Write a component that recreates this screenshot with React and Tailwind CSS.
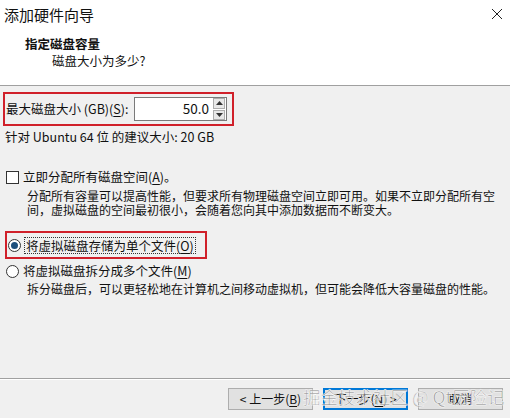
import React, { useState } from 'react';

const font = "font-['Noto_Sans_CJK_SC','Noto_Sans',sans-serif]";

const Key = ({ children }) => <span className="underline underline-offset-2">{children}</span>;

const SpinBox = ({ value }) => (
    <div className="ml-auto mr-[5px] flex h-[24px] w-[93px] items-center border border-[#7a7a7a] bg-white">
        <span className="flex-1 pr-[4px] text-right text-[13.5px] leading-none text-[#111]">{value}</span>
        <div className="mr-[1px] flex h-[22px] w-[12px] flex-col gap-[1px]">
            <div className="flex flex-1 items-center justify-center border border-[#adadad] bg-[#e8e8e8]">
                <svg width="7" height="4" viewBox="0 0 7 4"><path d="M0 4 L3.5 0 L7 4 Z" fill="#333" /></svg>
            </div>
            <div className="flex flex-1 items-center justify-center border border-[#adadad] bg-[#e8e8e8]">
                <svg width="7" height="4" viewBox="0 0 7 4"><path d="M0 0 L3.5 4 L7 0 Z" fill="#333" /></svg>
            </div>
        </div>
    </div>
);

const Radio = ({ checked }) => (
    <span className="flex h-[13px] w-[13px] shrink-0 items-center justify-center rounded-full border border-[#333] bg-white">
        {checked && <span className="h-[7px] w-[7px] rounded-full bg-[#1d4f7c]" />}
    </span>
);

const Button = ({ children, primary }) => (
    <div
        className={
            'flex h-[22px] w-[85px] items-center justify-center bg-[#e1e1e1] text-[12px] text-[#111] ' +
            (primary ? 'border-2 border-[#0078d7]' : 'border border-[#adadad]')
        }
    >
        {children}
    </div>
);

export default function App() {
    const [single, setSingle] = useState(true);

    return (
        <div className={`${font} relative flex h-[418px] w-[510px] flex-col bg-[#f0f0f0] text-[12px] text-[#111]`}>
            {/* header */}
            <div className="h-[86px] border-b border-[#a0a0a0] bg-white">
                <div className="flex h-[28px] items-center justify-between pl-[4px] pr-[7px]">
                    <span className="text-[15px] leading-none">添加硬件向导</span>
                    <svg width="12" height="12" viewBox="0 0 12 12">
                        <path d="M1 1 L11 11 M11 1 L1 11" stroke="#222" strokeWidth="1" />
                    </svg>
                </div>
                <div className="mt-[8px] pl-[25px] text-[12.5px] font-bold leading-[16px]">指定磁盘容量</div>
                <div className="mt-[1px] pl-[52px] text-[12.5px] leading-[16px]">磁盘大小为多少?</div>
            </div>

            {/* body */}
            <div className="flex flex-1 flex-col pt-[6px]">
                <div className="ml-[3px] flex h-[34px] w-[231px] items-center border-2 border-[#d0202a] pl-[1px]">
                    <span className="text-[12.5px]">
                        最大磁盘大小 (GB)(<Key>S</Key>):
                    </span>
                    <SpinBox value="50.0" />
                </div>
                <div className="mt-[3px] pl-[5px] text-[12.5px] leading-[16px]">针对 Ubuntu 64 位 的建议大小: 20 GB</div>

                <div className="mt-[24px] flex items-center gap-[4px] pl-[6px] leading-[16px]">
                    <span className="h-[13px] w-[13px] border border-[#333] bg-white" />
                    <span className="text-[12.5px]">
                        立即分配所有磁盘空间(<Key>A</Key>)。
                    </span>
                </div>
                <div className="mt-[4px] pl-[27px] text-[12px] leading-[14px]">
                    <div>分配所有容量可以提高性能，但要求所有物理磁盘空间立即可用。如果不立即分配所有空</div>
                    <div>间，虚拟磁盘的空间最初很小，会随着您向其中添加数据而不断变大。</div>
                </div>

                <div className="ml-[5px] mt-[14px] flex h-[28px] w-[202px] items-center border-2 border-[#d0202a]">
                    <button onClick={() => setSingle(true)} className="flex items-center gap-[3px] pl-[1px]">
                        <Radio checked={single} />
                        <span className="border border-dotted border-[#333] px-[1px] text-[12.5px] leading-[15px]">
                            将虚拟磁盘存储为单个文件(<Key>O</Key>)
                        </span>
                    </button>
                </div>
                <button onClick={() => setSingle(false)} className="mt-[4px] flex items-center gap-[4px] pl-[6px] leading-[16px]">
                    <Radio checked={!single} />
                    <span className="text-[12.5px]">
                        将虚拟磁盘拆分成多个文件(<Key>M</Key>)
                    </span>
                </button>
                <div className="mt-[2px] pl-[27px] text-[12px] leading-[16px]">
                    拆分磁盘后，可以更轻松地在计算机之间移动虚拟机，但可能会降低大容量磁盘的性能。
                </div>
            </div>

            {/* footer */}
            <div className="relative h-[40px] border-t border-[#a0a0a0]">
                <div className="h-px bg-white" />
                <div className="mt-[8px] flex justify-end gap-[10px] pr-[7px]">
                    <Button>
                        &lt; 上一步(<Key>B</Key>)
                    </Button>
                    <Button primary>
                        下一步(<Key>N</Key>) &gt;
                    </Button>
                    <Button>取消</Button>
                </div>
                <div className="pointer-events-none absolute left-[303px] top-[7px] whitespace-nowrap text-[17.5px] leading-[22px] text-[#7d7d7d]/75 [-webkit-text-stroke:0.5px_white]">
                    掘金技术社区 @ Qt历险记
                </div>
            </div>
        </div>
    );
}
